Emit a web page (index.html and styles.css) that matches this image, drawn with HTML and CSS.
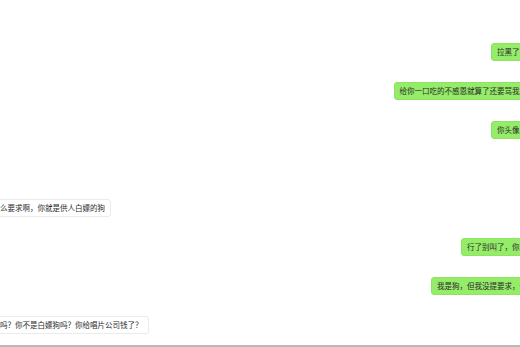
FILE: index.html
```html
<!DOCTYPE html>
<html lang="zh-CN">
<head>
    <meta charset="UTF-8">
    <meta name="viewport" content="width=device-width, initial-scale=1.0">
    <title>聊天记录</title>
    <link rel="stylesheet" href="styles.css">
</head>
<body>

    <div class="chat-window">
        <div class="message-list">
            <div class="bubble mine">拉黑了，滚</div>
            <div class="bubble mine">给你一口吃的不感恩就算了还要骂我是狗</div>
            <div class="bubble mine">你头像真丑</div>
            <div class="bubble theirs after-gap">你有什么要求啊，你就是供人白嫖的狗</div>
            <div class="bubble mine">行了别叫了，你走吧</div>
            <div class="bubble mine">我是狗，但我没提要求，你呢</div>
            <div class="bubble theirs">你给钱吗？你不是白嫖狗吗？你给唱片公司钱了？</div>
        </div>
    </div>

</body>
</html>
```

FILE: styles.css
```css
body {
    margin: 0;
    background-color: #ffffff;
    font-family: "Noto Sans CJK SC", "Noto Sans", sans-serif;
    overflow: hidden;
}
.chat-window {
    height: 345px;
    border-bottom: 2px solid #b9b9b9;
    overflow: hidden;
}
/* wider than the window: avatars and the rest of the text sit off screen */
.message-list {
    display: flex;
    flex-direction: column;
    gap: 21px;
    margin: 0 -20.5px 0 -28.5px;
    padding-top: 43px;
}
.bubble {
    font-size: 7.5px;
    line-height: 10px;
    padding: 3px 5px;
    border: 1px solid transparent;
    border-radius: 3px;
    color: #2b2b2b;
    white-space: nowrap;
}
.mine {
    align-self: flex-end;
    background-color: #95ec69;
    border-color: #8fe363;
}
.theirs {
    align-self: flex-start;
    background-color: #ffffff;
    border-color: #ebebeb;
}
.after-gap {
    margin-top: 39px;
}
```
